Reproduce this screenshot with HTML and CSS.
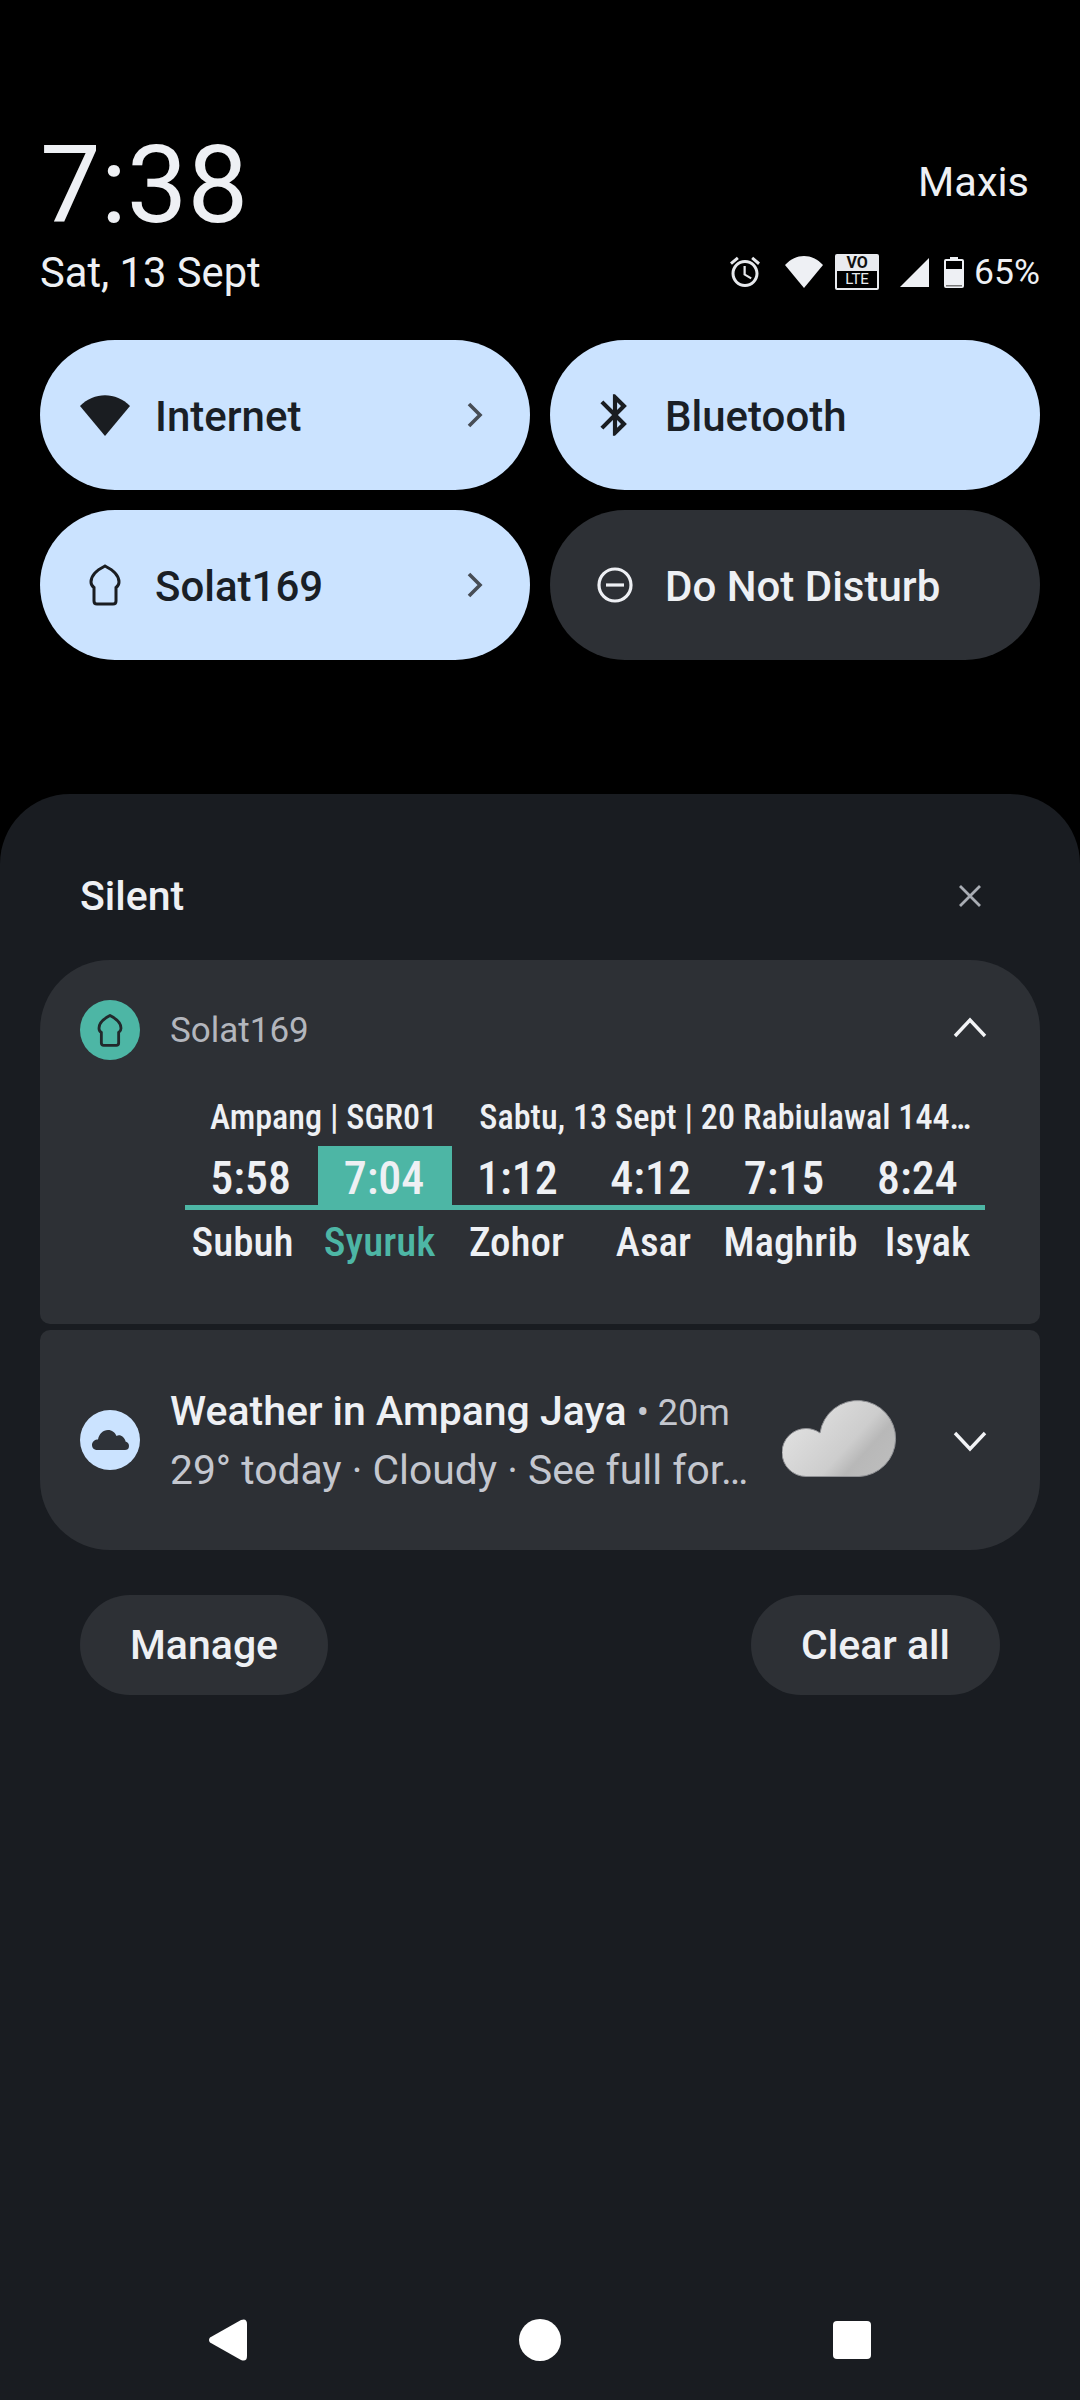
FILE: index.html
```html
<!DOCTYPE html>
<html lang="en">
<head>
	<meta charset="utf-8">
	<meta name="viewport" content="width=device-width,initial-scale=1">
	<title>Notification shade</title>
	<link rel="stylesheet" href="styles.css">
</head>
<body>
	<header class="status">
		<div class="status__left">
			<div class="clock">7:38</div>
			<div class="date">Sat, 13 Sept</div>
		</div>
		<div class="status__right">
			<div class="carrier">Maxis</div>
			<div class="status__icons">
				<svg class="ic-alarm" viewBox="0 0 24 24" fill="#e6e8ec"><path d="M22 5.72l-4.6-3.86-1.29 1.53 4.6 3.86L22 5.72zM7.88 3.39L6.6 1.86 2 5.71l1.29 1.53 4.59-3.85zM12.5 8H11v6l4.75 2.85.75-1.23-4-2.37V8zM12 4c-4.97 0-9 4.03-9 9s4.03 9 9 9 9-4.03 9-9-4.03-9-9-9zm0 16c-3.87 0-7-3.13-7-7s3.13-7 7-7 7 3.13 7 7-3.13 7-7 7z"/></svg>
				<svg class="ic-wifi" viewBox="0 0 38 32" fill="#eef0f4"><path d="M0 9C11-3 27-3 38 9L19 32Z"/></svg>
				<div class="volte"><span class="volte__vo">VO</span><span class="volte__lte">LTE</span></div>
				<svg class="ic-signal" viewBox="0 0 29 29" fill="#eef0f4"><path d="M29 0V29H0Z"/></svg>
				<svg class="ic-battery" viewBox="0 0 20 31"><path d="M6 0h8v2h4a2 2 0 0 1 2 2v25a2 2 0 0 1-2 2H2a2 2 0 0 1-2-2V4a2 2 0 0 1 2-2h4Z" fill="#eef0f4"/><rect x="2" y="4" width="16" height="8" fill="#000"/><rect x="2" y="28" width="16" height="1.5" fill="#777"/></svg>
				<span class="battery-pct">65%</span>
			</div>
		</div>
	</header>

	<section class="tiles">
		<div class="tile tile--on">
			<span class="tile__icon"><svg width="50" height="41" viewBox="0 0 50 41" fill="#1a1d21"><path d="M0 11C14-3.500 36-3.500 50 11L25 41Z"/></svg></span>
			<span class="tile__label">Internet</span>
			<svg class="tile__chevron" width="16" height="26" viewBox="0 0 16 26"><path d="M2 2l11 11L2 24" fill="none" stroke="#474d55" stroke-width="3.600"/></svg>
		</div>
		<div class="tile tile--on">
			<span class="tile__icon"><svg width="50" height="50" viewBox="0 0 24 24" fill="#1a1d21"><path d="M17.71 7.71L12 2h-1v7.59L6.41 5 5 6.41 10.59 12 5 17.59 6.41 19 11 14.41V22h1l5.71-5.71-4.3-4.29 4.3-4.29zM13 5.83l1.88 1.88L13 9.59V5.83zm1.88 10.46L13 18.17v-3.76l1.88 1.88z"/></svg></span>
			<span class="tile__label">Bluetooth</span>
		</div>
		<div class="tile tile--on">
			<span class="tile__icon"><svg width="32" height="42" viewBox="0 0 32 42"><path d="M16 2C23 5.500 30 10.500 30 18C30 20.500 28.500 22.500 27 23.500V37Q27 40 24 40H8Q5 40 5 37V23.500C3.500 22.500 2 20.500 2 18C2 10.500 9 5.500 16 2Z" fill="none" stroke="#1a1d21" stroke-width="3"/></svg></span>
			<span class="tile__label">Solat169</span>
			<svg class="tile__chevron" width="16" height="26" viewBox="0 0 16 26"><path d="M2 2l11 11L2 24" fill="none" stroke="#474d55" stroke-width="3.600"/></svg>
		</div>
		<div class="tile">
			<span class="tile__icon"><svg width="36" height="36" viewBox="0 0 36 36" fill="none" stroke="#eef0f4" stroke-width="3.200"><circle cx="18" cy="18" r="16"/><path d="M9 18H27"/></svg></span>
			<span class="tile__label">Do Not Disturb</span>
		</div>
	</section>

	<main class="panel">
		<div class="panel__head">
			<span class="panel__title">Silent</span>
			<svg width="24" height="24" viewBox="0 0 24 24"><path d="M2 2L22 22M22 2L2 22" stroke="#a9adb4" stroke-width="2.800"/></svg>
		</div>

		<article class="card card--prayer">
			<div class="card__app">
				<span class="badge badge--teal"><svg width="26" height="33" viewBox="0 0 32 42"><path d="M16 2C23 5.500 30 10.500 30 18C30 20.500 28.500 22.500 27 23.500V37Q27 40 24 40H8Q5 40 5 37V23.500C3.500 22.500 2 20.500 2 18C2 10.500 9 5.500 16 2Z" fill="none" stroke="#22282b" stroke-width="3.600"/></svg></span>
				<span class="card__appname">Solat169</span>
				<svg class="card__toggle card__toggle--up" width="34" height="22" viewBox="0 0 34 22"><path d="M2 20L17 4L32 20" fill="none" stroke="#f2f3f6" stroke-width="3.400"/></svg>
			</div>
			<div class="prayer">
				<div class="prayer__info">
					<span class="prayer__place">Ampang | SGR01</span>
					<span class="prayer__day">Sabtu, 13 Sept | 20 Rabiulawal 144…</span>
				</div>
				<div class="prayer__times">
					<span class="prayer__time">5:58</span>
					<span class="prayer__time prayer__time--now">7:04</span>
					<span class="prayer__time">1:12</span>
					<span class="prayer__time">4:12</span>
					<span class="prayer__time">7:15</span>
					<span class="prayer__time">8:24</span>
				</div>
				<div class="prayer__names">
					<span>Subuh</span>
					<span class="prayer__name--now">Syuruk</span>
					<span>Zohor</span>
					<span>Asar</span>
					<span>Maghrib</span>
					<span>Isyak</span>
				</div>
			</div>
		</article>

		<article class="card card--weather">
			<span class="badge badge--blue"><svg width="37" height="20" viewBox="0 0 37 20" fill="#2e3238"><path d="M6 20C2 20 0 18 0 15C0 11.500 3 9.500 6 9.500C7 4 11 0 16 0C20 0 23 2.500 24.500 6C26 5 29 5 31 7C33 9 33.500 10.500 33.500 11.500C36 12 37 14 37 16C37 19 35 20 33 20Z"/></svg></span>
			<div class="weather">
				<div class="weather__title"><strong>Weather in Ampang Jaya</strong> <span class="weather__time">• 20m</span></div>
				<div class="weather__text">29° today · Cloudy · See full for…</div>
			</div>
			<svg class="weather__cloud" width="115" height="77" viewBox="0 0 115 77">
				<defs>
					<linearGradient id="cloudfill" x1="0" y1="0.2" x2="1" y2="0.8">
						<stop offset="0" stop-color="#e4e4e4"/>
						<stop offset="0.6" stop-color="#cdcdcd"/>
						<stop offset="0.75" stop-color="#b8b8b8"/>
						<stop offset="1" stop-color="#bdbdbd"/>
					</linearGradient>
				</defs>
				<path d="M24 76.500A24 24 0 0 1 24 28.500C29 28.500 34 30 38 33A38 38 0 1 1 77 76.500Z" fill="url(#cloudfill)" stroke="#8f9094" stroke-width="1"/>
			</svg>
			<svg class="card__toggle card__toggle--down" width="34" height="22" viewBox="0 0 34 22"><path d="M2 2L17 18L32 2" fill="none" stroke="#f2f3f6" stroke-width="3.400"/></svg>
		</article>

		<div class="actions">
			<button class="pill">Manage</button>
			<button class="pill">Clear all</button>
		</div>

		<nav class="navbar">
			<svg width="38" height="42" viewBox="0 0 38 42" fill="#fff"><path d="M1 18.500L32 1Q38-1 38 5V37Q38 43 32 41L1 23.500Q-1 21 1 18.500Z"/></svg>
			<span class="navbar__home"></span>
			<span class="navbar__recent"></span>
		</nav>
	</main>
</body>
</html>
```

FILE: styles.css
```css
* {
	box-sizing: border-box;
}
html {
	height: 100%;
}
body {
	background: #000;
	color: #eef0f4;
	display: flex;
	flex-direction: column;
	font-family: Roboto, sans-serif;
	height: 2400px;
	margin: 0;
	overflow: hidden;
	width: 1080px;
}

/* STATUS */
.status {
	display: flex;
	justify-content: space-between;
	padding: 120px 40px 0;
}
.clock {
	font-size: 108px;
	font-weight: 400;
	line-height: 130px;
}
.date {
	font-size: 41.700px;
	line-height: 46px;
}
.carrier {
	font-size: 41.500px;
	line-height: 62px;
	margin-right: 11px;
	margin-top: 31px;
	text-align: right;
}
.status__icons {
	align-items: center;
	display: flex;
	margin-top: 38px;
}
.ic-alarm {
	height: 36px;
	width: 36px;
}
.ic-wifi {
	height: 32px;
	margin-left: 22px;
	width: 38px;
}
.volte {
	background: #e9ebef;
	border-radius: 2px;
	display: flex;
	flex-direction: column;
	height: 36px;
	margin-left: 12px;
	padding: 1px 2px 2px;
	width: 44px;
}
.volte__vo {
	color: #111;
	font-size: 16px;
	font-weight: 700;
	line-height: 16px;
	text-align: center;
}
.volte__lte {
	background: #000;
	color: #e9ebef;
	flex: 1;
	font-size: 15px;
	line-height: 17px;
	text-align: center;
}
.ic-signal {
	height: 29px;
	margin-left: 21px;
	width: 29px;
}
.ic-battery {
	height: 31px;
	margin-left: 15px;
	width: 20px;
}
.battery-pct {
	font-size: 35.500px;
	margin-left: 10px;
}

/* TILES */
.tiles {
	display: grid;
	gap: 20px;
	grid-template-columns: 490px 490px;
	margin-top: 44px;
	padding-inline: 40px;
}
.tile {
	align-items: center;
	background: #2d3035;
	border-radius: 75px;
	display: flex;
	font-size: 42px;
	font-weight: 500;
	height: 150px;
	padding-inline: 40px 47px;
}
.tile--on {
	background: #cbe3ff;
	color: #1a1f26;
}
.tile__icon {
	display: flex;
	justify-content: center;
	margin-right: 25px;
	width: 50px;
}
.tile__label {
	padding-top: 2px;
}
.tile__chevron {
	margin-left: auto;
}

/* PANEL */
.panel {
	background: #191c21;
	border-radius: 70px 70px 0 0;
	display: flex;
	flex: 1;
	flex-direction: column;
	margin-top: 134px;
	padding-inline: 40px;
}
.panel__head {
	align-items: center;
	display: flex;
	font-size: 41px;
	font-weight: 500;
	height: 166px;
	justify-content: space-between;
	padding: 38px 58px 0 40px;
}
.card {
	background: #2d3035;
	width: 1000px;
}
.card--prayer {
	border-radius: 70px 70px 10px 10px;
	height: 364px;
	padding: 40px 53px 0 40px;
}
.card__app {
	align-items: center;
	display: flex;
	height: 60px;
}
.badge {
	align-items: center;
	border-radius: 50%;
	display: flex;
	flex: none;
	height: 60px;
	justify-content: center;
	width: 60px;
}
.badge--teal {
	background: #4db6a5;
}
.badge--blue {
	background: #cbe3ff;
}
.card__appname {
	color: #b3b6bd;
	font-size: 35px;
	margin-left: 30px;
}
.card__toggle {
	flex: none;
	margin-left: auto;
}
.card__toggle--up {
	margin-bottom: 6px;
}
.card__toggle--down {
	margin-top: 3px;
}

/* PRAYER WIDGET */
.prayer {
	font-family: "Roboto Condensed", "Liberation Sans Narrow", Roboto, sans-serif;
	font-stretch: condensed;
	margin: 37px 0 0 105px;
	width: 800px;
}
.prayer__info {
	display: flex;
	font-size: 34.200px;
	font-weight: 500;
	height: 49px;
	line-height: 40px;
}
.prayer__place {
	margin-left: 25px;
}
.prayer__day {
	margin-left: 42px;
}
.prayer__times {
	border-bottom: 5px solid #4db6a5;
	display: grid;
	font-size: 46px;
	font-weight: 500;
	grid-template-columns: repeat(6, 1fr);
	height: 64px;
	line-height: 64px;
	text-align: center;
}
.prayer__time {
	padding-right: 2px;
}
.prayer__time--now {
	background: #4db6a5;
}
.prayer__names {
	display: grid;
	font-size: 41px;
	font-weight: 500;
	grid-template-columns: repeat(6, 137px);
	line-height: 64px;
	margin-left: -11px;
	text-align: center;
}
.prayer__name--now {
	color: #4db6a5;
}

/* WEATHER */
.card--weather {
	align-items: center;
	border-radius: 10px 10px 70px 70px;
	display: flex;
	height: 220px;
	margin-top: 6px;
	padding: 0 53px 0 40px;
}
.weather {
	margin-left: 30px;
	padding-top: 2px;
	width: 595px;
}
.weather__title {
	font-size: 41px;
	line-height: 56px;
}
.weather__title strong {
	font-weight: 500;
}
.weather__time,
.weather__text {
	color: #c4c7cf;
}
.weather__time {
	font-size: 36px;
}
.weather__text {
	font-size: 40.800px;
	line-height: 58px;
}
.weather__cloud {
	flex: none;
	margin-bottom: 3px;
	margin-left: 17px;
}

/* ACTIONS */
.actions {
	display: flex;
	justify-content: space-between;
	margin-top: 45px;
	padding-inline: 40px;
}
.pill {
	background: #2d3035;
	border: none;
	border-radius: 50px;
	color: #eef0f4;
	font-family: inherit;
	font-size: 41px;
	font-weight: 500;
	height: 100px;
	padding-inline: 50px;
}

/* NAV */
.navbar {
	align-items: center;
	display: flex;
	height: 42px;
	justify-content: space-between;
	margin: auto 169px 39px;
}
.navbar__home {
	background: #fff;
	border-radius: 50%;
	height: 42px;
	width: 42px;
}
.navbar__recent {
	background: #fff;
	border-radius: 4px;
	height: 38px;
	width: 38px;
}
```
